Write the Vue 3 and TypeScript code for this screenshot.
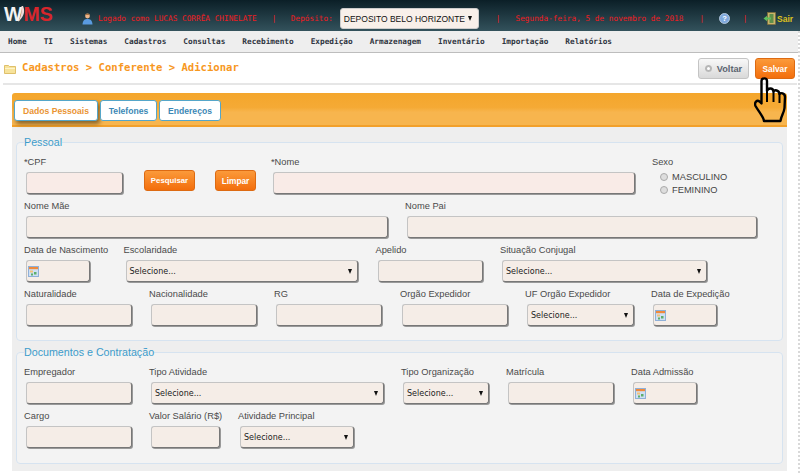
<script setup lang="ts">
import { ref } from 'vue'

type Kind = 'text' | 'select' | 'date'

interface Field {
  label: string
  // distance until the next field starts
  w: number
  // width of the input itself
  cw: number
  kind: Kind
  req?: boolean
}

const menu = ['Home', 'TI', 'Sistemas', 'Cadastros', 'Consultas', 'Recebimento', 'Expedição', 'Armazenagem', 'Inventário', 'Importação', 'Relatórios']
const tabs = ['Dados Pessoais', 'Telefones', 'Endereços']
const activeTab = ref(0)

const pessoal: Field[][] = [
  [
    { label: 'Nome Mãe', w: 381, cw: 362, kind: 'text' },
    { label: 'Nome Pai', w: 352, cw: 350, kind: 'text' }
  ],
  [
    { label: 'Data de Nascimento', w: 99.5, cw: 64, kind: 'date' },
    { label: 'Escolaridade', w: 252, cw: 232, kind: 'select' },
    { label: 'Apelido', w: 124.5, cw: 105.5, kind: 'text' },
    { label: 'Situação Conjugal', w: 208, cw: 205, kind: 'select' }
  ],
  [
    { label: 'Naturalidade', w: 125, cw: 106, kind: 'text' },
    { label: 'Nacionalidade', w: 125, cw: 106, kind: 'text' },
    { label: 'RG', w: 126, cw: 106, kind: 'text' },
    { label: 'Orgão Expedidor', w: 125, cw: 105.5, kind: 'text' },
    { label: 'UF Orgão Expedidor', w: 126, cw: 107, kind: 'select' },
    { label: 'Data de Expedição', w: 80, cw: 64, kind: 'date' }
  ]
]

const documentos: Field[][] = [
  [
    { label: 'Empregador', w: 125, cw: 106, kind: 'text' },
    { label: 'Tipo Atividade', w: 252, cw: 233, kind: 'select' },
    { label: 'Tipo Organização', w: 105, cw: 85.5, kind: 'select' },
    { label: 'Matrícula', w: 125, cw: 106, kind: 'text' },
    { label: 'Data Admissão', w: 80, cw: 64, kind: 'date' }
  ],
  [
    { label: 'Cargo', w: 125, cw: 106, kind: 'text' },
    { label: 'Valor Salário (R$)', w: 89, cw: 69, kind: 'text' },
    { label: 'Atividade Principal', w: 130, cw: 114, kind: 'select' }
  ]
]

const sections = [
  { title: 'Pessoal', rows: pessoal, cls: 'first' },
  { title: 'Documentos e Contratação', rows: documentos, cls: 'second' }
]
</script>

<template>
  <div class="page">
    <header class="topbar">
      <div class="logo"><span class="logo-w">W</span><svg class="logo-swoosh" width="8" height="16" viewBox="0 0 8 16"><path d="M5 0 C7.500 5 6 11 0 16 C3 11 4 6 3.500 0 Z" fill="#f0d8d8" /></svg><span class="logo-ms">MS</span></div>
      <svg class="user-icon" width="11" height="12" viewBox="0 0 11 12">
        <circle cx="5.5" cy="3" r="2.4" fill="#eeb68a" />
        <path d="M3 2.5 C3 0 8 0 8 2.5 L7 1.8 L4 1.8 Z" fill="#8a5a2c" />
        <path d="M0.5 11.5 C0.8 7 3 6 5.5 6 C8 6 10.2 7 10.5 11.5 Z" fill="#5a9be0" />
      </svg>
      <span class="info login">Logado como LUCAS CORRÊA CHINELATE</span>
      <span class="info sep one">|</span>
      <span class="info dep">Depósito:</span>
      <div class="deposit">DEPOSITO BELO HORIZONTE <i class="caret"></i></div>
      <span class="info sep two">|</span>
      <span class="info date">Segunda-feira, 5 de novembro de 2018</span>
      <span class="info sep three">|</span>
      <svg class="help-icon" width="11" height="11" viewBox="0 0 11 11">
        <circle cx="5.5" cy="5.5" r="5" fill="#7fa9dc" stroke="#c7d8ee" stroke-width="0.8" />
        <text x="5.5" y="8.2" text-anchor="middle" font-size="7.5" font-weight="700" font-family="Liberation Sans, sans-serif" fill="#fff">?</text>
      </svg>
      <span class="info sep four">|</span>
      <svg class="exit-icon" width="13" height="13" viewBox="0 0 13 13">
        <rect x="4.500" y="0.5" width="8" height="12" fill="#c9b36a" stroke="#7d6c35" stroke-width="0.6" />
        <rect x="6.500" y="2" width="4" height="9" fill="#5f8f4a" />
        <path d="M0.5 6.5 L4 3.8 V5.4 H8 V7.6 H4 V9.2 Z" fill="#5cc05c" />
      </svg>
      <span class="exit-text">Sair</span>
    </header>

    <nav class="menu">
      <a v-for="m in menu" :key="m">{{ m }}</a>
    </nav>

    <div class="titlebar">
      <svg class="folder" width="12" height="10" viewBox="0 0 12 10">
        <path d="M0.5 1.5 H4.5 L5.5 2.5 H11.5 V9.5 H0.5 Z" fill="#f7e39b" stroke="#d8b452" stroke-width="0.8" />
        <rect x="1" y="4" width="10" height="1" fill="#fff4c8" />
      </svg>
      <h1>Cadastros &gt; Conferente &gt; Adicionar</h1>
      <button class="btn-back"><i class="back-dot"></i>Voltar</button>
      <button class="btn-orange save">Salvar</button>
    </div>

    <main class="panel">
      <div class="tabbar">
        <button
          v-for="(t, i) in tabs"
          :key="t"
          class="tab"
          :class="{ active: i === activeTab }"
          @click="activeTab = i"
        >{{ t }}</button>
      </div>

      <div class="body">
        <fieldset v-for="s in sections" :key="s.title" :class="s.cls">
          <legend>{{ s.title }}</legend>

          <div v-if="s.cls === 'first'" class="row">
            <div class="field" style="width: 120px">
              <label>*CPF</label>
              <input class="ctl req" style="width: 97px" />
            </div>
            <button class="btn-orange search">Pesquisar</button>
            <button class="btn-orange clear">Limpar</button>
            <div class="field" style="width: 381px">
              <label>*Nome</label>
              <input class="ctl req" style="width: 362px" />
            </div>
            <div class="sex">
              <label>Sexo</label>
              <div class="radio"><i></i>MASCULINO</div>
              <div class="radio"><i></i>FEMININO</div>
            </div>
          </div>

          <div v-for="(row, ri) in s.rows" :key="ri" class="row">
            <div v-for="f in row" :key="f.label" class="field" :style="{ width: f.w + 'px' }">
              <label>{{ f.label }}</label>
              <div v-if="f.kind === 'select'" class="ctl select" :style="{ width: f.cw + 'px' }">
                Selecione...<i class="caret"></i>
              </div>
              <div v-else-if="f.kind === 'date'" class="ctl datebox" :style="{ width: f.cw + 'px' }">
                <svg width="11" height="11" viewBox="0 0 11 11">
                  <rect x="0.5" y="0.5" width="10" height="10" fill="#cfe0f4" stroke="#8fb0d8" />
                  <rect x="1" y="1" width="9" height="2.2" fill="#f08a3c" />
                  <rect x="2" y="4.5" width="3" height="2" fill="#f3c27a" />
                  <rect x="6" y="6" width="2.5" height="2.5" fill="#5fae6a" />
                  <rect x="3" y="7.5" width="2" height="2" fill="#5fae6a" />
                </svg>
              </div>
              <input v-else class="ctl" :style="{ width: f.cw + 'px' }" />
            </div>
          </div>
        </fieldset>
      </div>
    </main>

    <!-- faixa pontilhada na borda direita -->
    <div class="edge"></div>

    <!-- cursor sobre o botao salvar -->
    <svg class="hand" width="34" height="46" viewBox="0 0 34 46">
      <path
        d="M7.500 4 C7.500 0.500 13 0.500 13 4 V14 C14 10.500 19 10.500 19.500 14.500 C20.500 12.500 25 13 25.500 17 C26.500 15.500 31 16 31 20 L30.500 31 C30 36 27 39 26.500 44 H10 C9.500 40 5 35 1.500 29 C0 25.500 3 22.500 5.500 24.500 L7.500 26.500 Z"
        fill="none"
        stroke="#000"
        stroke-width="2.400"
        stroke-linejoin="round"
      />
      <path d="M13 14 V25 M19.500 14.500 V25 M25.500 17 V26" fill="none" stroke="#000" stroke-width="2" />
    </svg>
  </div>
</template>

<style>
html,
body {
  margin: 0;
  background: #fff;
}
</style>

<style scoped>
.page {
  position: relative;
  width: 800px;
  height: 475px;
  overflow: hidden;
  background: #fff;
  font-family: "Liberation Sans", Arial, sans-serif;
  color: #444;
  font-size: 10px;
}

.topbar {
  display: flex;
  align-items: center;
  height: 31px;
  box-sizing: border-box;
  background: linear-gradient(#0b1f27, #33525c);
}

.logo {
  display: flex;
  align-items: center;
  width: 82px;
  padding-left: 4px;
  box-sizing: border-box;
  font-size: 19.5px;
  font-weight: 700;
  margin-top: -3px;
}

.logo-w {
  color: #f2f2f2;
}

.logo-swoosh {
  margin: 0 -3px 0 -4px;
}

.logo-ms {
  color: #d8262c;
}

.user-icon {
  margin-right: 5px;
  margin-top: 6px;
}

.info {
  font-family: "DejaVu Sans Mono", monospace;
  font-size: 7.75px;
  color: #ee1c22;
  margin-top: 6px;
  white-space: nowrap;
}

.sep.one {
  margin-left: 15px;
}

.dep {
  margin-left: 14.5px;
}

.deposit {
  display: flex;
  align-items: center;
  justify-content: space-between;
  box-sizing: border-box;
  width: 139px;
  height: 21px;
  margin: 6px 0 0 7px;
  padding: 0 6px 0 3px;
  background: #f8f0ea;
  border: 1px solid #ccc;
  border-radius: 3px;
  font-size: 8.5px;
  color: #111;
  white-space: nowrap;
}

.sep.two {
  margin-left: 17px;
}

.date {
  margin-left: 15px;
}

.sep.three {
  margin-left: 16px;
}

.help-icon {
  margin: 6px 0 0 15px;
}

.sep.four {
  margin-left: 12.7px;
}

.exit-icon {
  margin: 5px 0 0 15.6px;
}

.exit-text {
  margin: 6px 0 0 1px;
  color: #dcc020;
  font-size: 8.5px;
  font-weight: 700;
}

.caret {
  display: block;
  width: 0;
  height: 0;
  border-left: 2.5px solid transparent;
  border-right: 2.5px solid transparent;
  border-top: 5px solid #111;
}

.menu {
  display: flex;
  align-items: center;
  gap: 17px;
  height: 21px;
  margin-right: 2px;
  padding-left: 8px;
  background: #eee;
  border-bottom: 1px solid #bdbdbd;
  font-family: "DejaVu Sans Mono", monospace;
  font-size: 7.75px;
  font-weight: 700;
  color: #2e3440;
}

.titlebar {
  display: flex;
  align-items: center;
  height: 30px;
  margin: 0 3px;
  border-bottom: 2px solid #e6e6e6;
}

.folder {
  margin: 1px 7px 0 1px;
}

h1 {
  margin: 0 auto 3px -1px;
  font-family: "DejaVu Sans Mono", monospace;
  font-size: 10.6px;
  font-weight: 700;
  color: #f7981f;
}

.btn-back {
  display: flex;
  align-items: center;
  justify-content: center;
  gap: 5px;
  width: 51px;
  height: 21px;
  margin: 1px 6px 0 0;
  padding: 0;
  box-sizing: border-box;
  border: 1px solid #c4c4c4;
  border-radius: 3px;
  background: linear-gradient(#f8f8f8, #d9d9d9);
  font-family: inherit;
  font-size: 9.2px;
  font-weight: 700;
  color: #5c6470;
}

.back-dot {
  width: 7px;
  height: 7px;
  border-radius: 50%;
  background: #fff;
  box-shadow: inset 0 0 0 2px #b7b7b7;
}

.btn-orange {
  height: 21px;
  padding: 0;
  box-sizing: border-box;
  border: 1px solid #dd6a12;
  border-radius: 3px;
  background: linear-gradient(#fb9a3a, #f36e0c);
  font-family: inherit;
  font-size: 8.3px;
  font-weight: 700;
  color: #fff;
}

.save {
  width: 40px;
  margin: 1px 2px 0 0;
}

.panel {
  margin: 8px 13px 0 12px;
}

.tabbar {
  display: flex;
  gap: 2px;
  height: 34px;
  box-sizing: border-box;
  padding: 7px 0 0 2px;
  border-radius: 3px 3px 0 0;
  background: linear-gradient(#f4a62c 0%, #f5aa35 45%, #f7b54e 60%, #f7b54e 100%);
  border-bottom: 2px solid #f2a02a;
}

.tab {
  flex: none;
  height: 21px;
  padding: 0;
  box-sizing: border-box;
  border: 1px solid #55a6c9;
  border-radius: 3px;
  background: #fff;
  font-family: inherit;
  font-size: 8.6px;
  font-weight: 700;
  color: #3c88b5;
}

.tab:nth-child(1) {
  width: 84px;
}

.tab:nth-child(2) {
  width: 57px;
}

.tab:nth-child(3) {
  width: 62px;
}

.tab.active {
  color: #ea9433;
  box-shadow: 2px 3px 4px rgba(0, 0, 0, 0.45);
}

.body {
  height: 344px;
  box-sizing: border-box;
  padding: 9px 4px 0 4px;
  background: #eee;
}

fieldset {
  margin: 0;
  padding: 0 0 0 7px;
  min-width: 0;
  background: #f3f3f3;
  border: 1px solid #d6e3f0;
  border-radius: 4px;
}

fieldset.first {
  height: 205px;
  box-sizing: border-box;
}

fieldset.second {
  height: 118px;
  box-sizing: border-box;
  margin-top: 5px;
}

legend {
  padding: 0;
  font-size: 10.7px;
  line-height: 13px;
  color: #3c9ccb;
}

.row {
  display: flex;
  height: 44px;
}

.row:first-of-type {
  margin-top: 6px;
}

.field {
  flex: none;
}

.field label,
.sex label {
  display: block;
  height: 17px;
  line-height: 14px;
  font-size: 9.3px;
  color: #4a4a4a;
  white-space: nowrap;
}

.ctl {
  display: block;
  height: 22px;
  margin: 0 0 0 2px;
  padding: 0;
  box-sizing: border-box;
  background: #f5ede7;
  border: 1px solid #c4c4c4;
  border-right-color: #777;
  border-bottom-color: #777;
  border-radius: 3px;
  box-shadow: 1px 1px 0 #999;
  outline: none;
}

.ctl.req {
  background: #f9ebe7;
}

.select {
  display: flex;
  align-items: center;
  justify-content: space-between;
  padding: 0 5px 0 3px;
  font-family: "DejaVu Sans", sans-serif;
  font-size: 8px;
  color: #222;
}

.datebox {
  display: flex;
  align-items: center;
  padding-left: 1px;
}

.search {
  width: 51px;
  margin: 15px 0 0 0;
  font-size: 7.8px;
}

.clear {
  width: 41px;
  margin: 15px 15px 0 20px;
}

.sex label {
  height: 15px;
}

.radio {
  display: flex;
  align-items: center;
  gap: 4px;
  height: 13.5px;
  margin-left: 8px;
  font-size: 9.3px;
  color: #444;
}

.radio i {
  width: 6px;
  height: 6px;
  border: 1px solid #aaa;
  border-radius: 50%;
  background: #ddd;
}

.edge {
  position: absolute;
  top: 31px;
  right: 0;
  bottom: 0;
  width: 2px;
  background: repeating-linear-gradient(#d9d9d9 0 2px, #fff 2px 4px);
}

.hand {
  position: absolute;
  left: 754px;
  top: 77px;
}
</style>
